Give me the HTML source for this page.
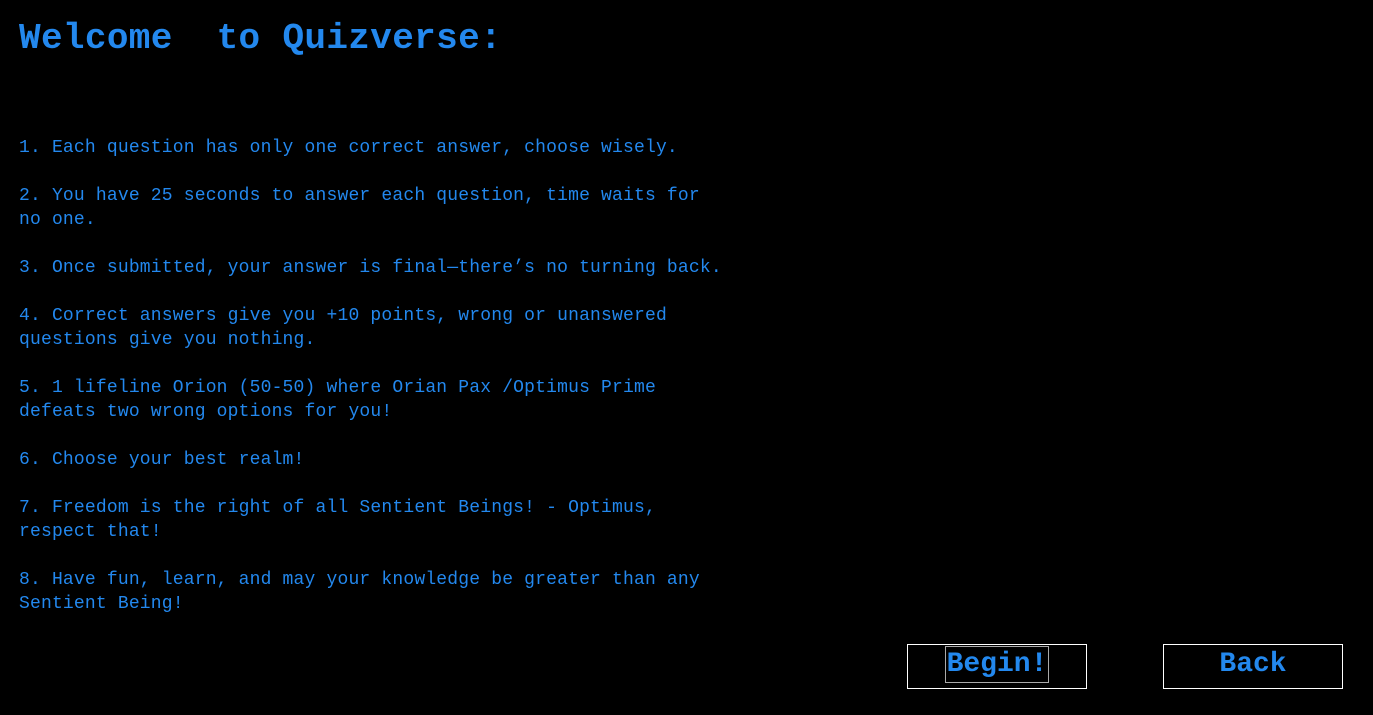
<!DOCTYPE html>
<html><head><style>
body{margin:0;background:#000;width:1373px;height:715px;overflow:hidden;font-family:"Liberation Mono",monospace;color:#2388ee}
h1{position:absolute;left:19px;top:17px;margin:0;font-size:36px;letter-spacing:0.35px;line-height:44px;font-weight:bold;white-space:pre}
.r{position:absolute;left:19px;font-size:18px;letter-spacing:0.18px;line-height:24px;white-space:pre}
.b{position:absolute;top:644px;width:178px;height:43px;border:1px solid #fff;font-size:28px;font-weight:bold;text-align:center;line-height:36px}
.b span{display:inline-block;padding:0 1px;margin-top:2px;line-height:35px}
</style></head><body>
<h1>Welcome  to Quizverse:</h1>
<div class="r" style="top:136px">1. Each question has only one correct answer, choose wisely.</div>
<div class="r" style="top:184px">2. You have 25 seconds to answer each question, time waits for
no one.</div>
<div class="r" style="top:256px">3. Once submitted, your answer is final—there’s no turning back.</div>
<div class="r" style="top:304px">4. Correct answers give you +10 points, wrong or unanswered
questions give you nothing.</div>
<div class="r" style="top:376px">5. 1 lifeline Orion (50-50) where Orian Pax /Optimus Prime
defeats two wrong options for you!</div>
<div class="r" style="top:448px">6. Choose your best realm!</div>
<div class="r" style="top:496px">7. Freedom is the right of all Sentient Beings! - Optimus,
respect that!</div>
<div class="r" style="top:568px">8. Have fun, learn, and may your knowledge be greater than any
Sentient Being!</div>
<div class="b" style="left:907px"><span style="outline:1px solid #aaa">Begin!</span></div>
<div class="b" style="left:1163px"><span>Back</span></div>
</body></html>
